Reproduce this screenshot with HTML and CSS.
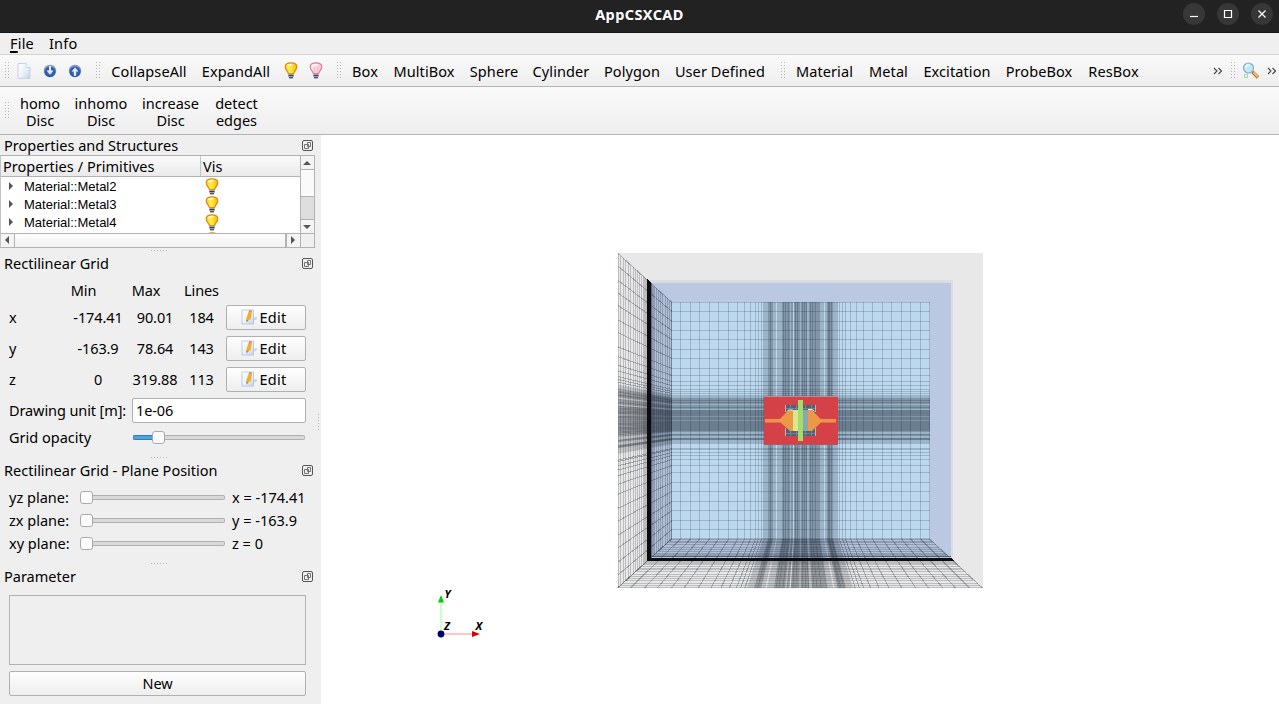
FILE: index.html
```
<!DOCTYPE html>
<html lang="en">
<head>
<meta charset="utf-8">
<title>AppCSXCAD</title>
<link rel="stylesheet" href="styles.css">
</head>
<body>
<svg class="defs" width="0" height="0">
  <defs>
    <linearGradient id="gold" x1="0" x2="1"><stop offset="0" stop-color="#ffd21e"/><stop offset=".4" stop-color="#fff04a"/><stop offset="1" stop-color="#f9b800"/></linearGradient>
    <linearGradient id="pink" x1="0" x2="1"><stop offset="0" stop-color="#ffe9ee"/><stop offset="1" stop-color="#ffc4d2"/></linearGradient>
    <linearGradient id="paper" x1="0" x2="1" y2="1"><stop offset="0" stop-color="#fff"/><stop offset=".5" stop-color="#eef3fb"/><stop offset="1" stop-color="#c3d1ea"/></linearGradient>
    <radialGradient id="orb" cx=".5" cy=".6"><stop offset="0" stop-color="#5b9be8"/><stop offset=".7" stop-color="#2450a6"/><stop offset="1" stop-color="#7d94c4"/></radialGradient>
    <symbol id="bulb" viewBox="0 0 14 17">
      <path d="M4.300 11.500C4 9.300 1.200 8 1.200 4.700 1.200 2.200 3.500.8 7 .8s5.800 1.400 5.800 3.900C12.800 8 10 9.300 9.700 11.500z" fill="url(#gold)" stroke="#e08412" stroke-width="1.200"/>
      <path d="M3.500 4Q5 2.200 8.500 2.600" stroke="#fffbe0" stroke-width="1.500" fill="none"/>
      <path d="M4.300 11.800h5.400v3L8.500 16.500h-3L4.300 14.800z" fill="#a4a4ac"/><path d="M4.500 13.500h5M5 15.700h4" stroke="#3c3c44"/>
    </symbol>
    <symbol id="bulb-off" viewBox="0 0 14 17">
      <path d="M4.300 11.500C4 9.300 1.200 8 1.200 4.700 1.200 2.200 3.500.8 7 .8s5.800 1.400 5.800 3.900C12.800 8 10 9.300 9.700 11.500z" fill="url(#pink)" stroke="#d58296" stroke-width="1.200"/>
      <path d="M5 5l1 6M9 5l-1 6" stroke="#f3a9ba" stroke-width=".7"/>
      <path d="M3.500 4Q5 2.200 8.500 2.600" stroke="#fff" stroke-width="1.300" fill="none"/>
      <path d="M4.300 11.800h5.400v3L8.500 16.500h-3L4.300 14.800z" fill="#a79dbb"/><path d="M4.500 13.500h5M5 15.700h4" stroke="#4c3c64"/>
    </symbol>
    <symbol id="float" viewBox="0 0 12 12">
      <rect x=".5" y=".5" width="10" height="10" rx="1.500" fill="none" stroke="#555"/>
      <path d="M5.500 2.500h3v4h-3zM2.500 4.500h4v4h-4z" fill="none" stroke="#666" stroke-width=".9"/>
    </symbol>
    <symbol id="edit" viewBox="0 0 17 16">
      <path d="M10 9l6-1v2l-6 3z" fill="#cfd2d8"/>
      <rect x="1" y="1" width="11.500" height="14" fill="url(#paper)" stroke="#b0c0e0" stroke-width=".8"/>
      <path d="M5.800 12.500l-.3-2.500L8 2.500l2.600 0L9.500 9.700z" fill="#f6b21c" stroke="#d98e10" stroke-width=".4"/>
      <path d="M7.900 2.600l2.700.1V1.500L8.300 1.200z" fill="#d8705a"/>
      <path d="M5.800 12.700l-.2-1.500 1.200.5z" fill="#333"/>
    </symbol>
  </defs>
</svg>
<header class="titlebar">
  <span class="caption">AppCSXCAD</span>
  <div class="winbtns">
    <svg width="22" height="22"><circle cx="11" cy="11" r="11"/><path d="M7 13.500h8"/></svg>
    <svg width="22" height="22"><circle cx="11" cy="11" r="11"/><path d="M7.500 7.500h7v7h-7z"/></svg>
    <svg width="22" height="22"><circle cx="11" cy="11" r="11"/><path d="M7.500 7.500l7 7M14.500 7.500l-7 7" stroke-width="1.600"/></svg>
  </div>
</header>
<nav class="menubar"><span><u>F</u>ile</span><span>Info</span></nav>
<div class="toolbar main">
  <i class="handle"></i>
  <svg class="new" width="14" height="16"><path d="M1 .5h8l4 4v11H1z" fill="url(#paper)" stroke="#bccbe6" stroke-width=".8"/><path d="M9 .5v4h4" fill="#fff" stroke="#bccbe6" stroke-width=".8"/></svg>
  <svg class="open" width="14" height="14"><circle cx="7" cy="7" r="6.200" fill="url(#orb)"/><path d="M6 2h2v4.500h2.500L7 10.500 3.500 6.500H6z" fill="#e6f0ff"/></svg>
  <svg class="save" width="14" height="14"><circle cx="7" cy="7" r="6.200" fill="url(#orb)"/><path d="M6 12h2V7.500h2.500L7 3.500 3.500 7.500H6z" fill="#e6f0ff"/></svg>
  <i class="handle h2"></i>
  <span class="w91">CollapseAll</span><span class="w91">ExpandAll</span>
  <svg class="b1" width="14" height="17"><use href="#bulb"/></svg>
  <svg class="b2" width="14" height="17"><use href="#bulb-off"/></svg>
  <i class="handle h3"></i>
  <span class="w41">Box</span><span class="w77">MultiBox</span><span class="w63">Sphere</span><span class="w71">Cylinder</span><span class="w71">Polygon</span><span class="w105">User Defined</span>
  <i class="handle h4"></i>
  <span class="w72">Material</span><span class="w55">Metal</span><span class="w83">Excitation</span><span class="w82">ProbeBox</span><span class="w66">ResBox</span>
  <svg class="more m1" width="10" height="8"><path d="M1 1l3 3-3 3M5.500 1l3 3-3 3"/></svg>
  <i class="handle h5"></i>
  <svg class="lens" width="18" height="17"><path d="M10.500 10l5.500 5.500" stroke="#a87832" stroke-width="3.400"/><path d="M11.500 10.500l4.300 4.300" stroke="#f6bf62" stroke-width="1.800"/><circle cx="6.500" cy="6" r="5" fill="#bfe8fa" stroke="#8aa9cc" stroke-width="1.200"/><path d="M3.500 5.500Q4 3 7 3" stroke="#fff" stroke-width="1.500" fill="none"/><rect x="2.500" y="12.500" width="3" height="3" fill="none" stroke="#a9d8a9"/></svg>
  <svg class="more m2" width="10" height="8"><path d="M1 1l3 3-3 3M5.500 1l3 3-3 3"/></svg>
</div>
<div class="toolbar second">
  <i class="handle"></i>
  <span class="d1">homo<br>Disc</span><span class="d2">inhomo<br>Disc</span><span class="d3">increase<br>Disc</span><span class="d4">detect<br>edges</span>
</div>
<main class="work">
  <aside class="docks">
    <div class="stack">
    <h2>Properties and Structures<svg width="12" height="12"><use href="#float"/></svg></h2>
    <div class="tree">
      <div class="pane">
        <div class="thead"><span>Properties / Primitives</span><span>Vis</span></div>
        <div class="rows">
          <div class="row"><i></i><span>Material::Metal2</span><svg width="14" height="17"><use href="#bulb"/></svg></div>
          <div class="row"><i></i><span>Material::Metal3</span><svg width="14" height="17"><use href="#bulb"/></svg></div>
          <div class="row"><i></i><span>Material::Metal4</span><svg width="14" height="17"><use href="#bulb"/></svg></div>
          <div class="row"><i class="blank"></i><span></span><svg width="14" height="17"><use href="#bulb"/></svg></div>
        </div>
      </div>
      <div class="vbar"><b class="up"></b><div class="thumb"></div><div class="track"></div><b class="down"></b></div>
      <div class="hbar"><b class="left"></b><div class="thumb"></div><b class="right"></b></div>
      <div class="corner"></div>
    </div>
    <div class="split"><i></i></div>
    <h2>Rectilinear Grid<svg width="12" height="12"><use href="#float"/></svg></h2>
    <div class="gridinfo">
      <span></span><span class="min">Min</span><span class="max">Max</span><span class="ln">Lines</span><span></span>
      <span class="ax up1">x</span><span class="val up1">-174.41</span><span class="up1">90.01</span><span class="ln up1">184</span><button><svg width="17" height="16"><use href="#edit"/></svg>Edit</button>
      <span class="ax up1">y</span><span class="val up1">-163.9</span><span class="up1">78.64</span><span class="ln up1">143</span><button><svg width="17" height="16"><use href="#edit"/></svg>Edit</button>
      <span class="ax up1">z</span><span class="val up1">0</span><span class="up1">319.88</span><span class="ln up1">113</span><button><svg width="17" height="16"><use href="#edit"/></svg>Edit</button>
    </div>
    <div class="field"><label>Drawing unit [m]:</label><div class="input">1e-06</div></div>
    <div class="field opacity"><label>Grid opacity</label><div class="slider"><b class="fill"></b><b class="knob"></b><b class="rest"></b></div></div>
    <div class="split s2"><i></i></div>
    <h2>Rectilinear Grid - Plane Position<svg width="12" height="12"><use href="#float"/></svg></h2>
    <div class="planes">
      <div class="plane"><label>yz plane:</label><div class="slider"><b class="knob"></b><b class="rest"></b></div><span>x = -174.41</span></div>
      <div class="plane"><label>zx plane:</label><div class="slider"><b class="knob"></b><b class="rest"></b></div><span>y = -163.9</span></div>
      <div class="plane"><label>xy plane:</label><div class="slider"><b class="knob"></b><b class="rest"></b></div><span>z = 0</span></div>
    </div>
    <div class="split s3"><i></i></div>
    <h2>Parameter<svg width="12" height="12"><use href="#float"/></svg></h2>
    <div class="params"></div>
    <button class="newparam">New</button>
    </div>
    <div class="vsplit"><i></i></div>
  </aside>
  <svg class="view" viewBox="321 135 958 569" width="958" height="569">
    <g shape-rendering="crispEdges">
      <rect x="617.500" y="253" width="365.500" height="335" fill="#e8e8e8"/>
      <rect x="647" y="280" width="306" height="281" fill="#dbdce2"/>
      <rect x="650" y="283" width="301" height="276" fill="#bac9e1"/>
      <rect x="672" y="302" width="258" height="237" fill="#bcd8ee"/>
      <g id="mesh" stroke="#08121c" fill="none"></g>
      <path d="M647 279l4 4v274.500h300l3 3.500H647z" fill="#0c0c0e"/>
      <path d="M651.500 283v273.500H951" fill="none" stroke="#26344a" opacity=".6"/>
    </g>
    <g shape-rendering="crispEdges">
      <rect x="764" y="396" width="73.500" height="48.500" fill="#d44247"/>
      <path d="M764 396.500h74" stroke="#c98b98"/><path d="M764 444.500h74" stroke="#a45a6c"/>
      <rect x="786" y="405" width="30" height="31" fill="#4d6275"/>
      <path d="M790.500 405v31M796.500 405v31M805.500 405v31M811.500 405v31M786 408.500h30M786 433.500h30" stroke="#6f8798"/>
      <path d="M785.500 405v7M785.500 428v8M815.500 405v7M815.500 428v8" stroke="#e3a5a8"/>
    </g>
    <path d="M765 419h15l8-8.500 3-.5h3v21h-4l-9.500-8.500H765z" fill="#ec9847"/>
    <path d="M836 419h-15.500l-8-8.500-2-.5h-2.500v21h4l9-8.500h15z" fill="#ec9847"/>
    <path d="M787 411.500l1.500-1.500H793M808 409.500h4l2.500 2" stroke="#f2eee8" fill="none"/>
    <path d="M766 420.500h13M822 420.500h13" stroke="#e08f50"/>
    <rect x="793" y="410" width="5" height="21" fill="#dce68f"/>
    <rect x="803" y="410" width="5" height="21" fill="#8ba7a9"/>
    <rect x="798" y="400" width="5" height="41" fill="#a3dc6c"/>
    <path d="M441 602v29" stroke="#b0ffb0" stroke-width="1.300"/><path d="M444 634h29" stroke="#ffabab" stroke-width="1.300"/>
    <path d="M441 595l3 7.500h-6z" fill="#00d000"/><path d="M480 634l-8 3v-6z" fill="#dc0000"/>
    <circle cx="441" cy="634" r="3.400" fill="#000066"/>
    <g class="axis"><text x="444.500" y="598">Y</text><text x="444" y="630">Z</text><text x="475.500" y="630">X</text></g>
  </svg>
</main>
<script src="mesh.js"></script>
</body>
</html>
```
FILE: styles.css
```
* { box-sizing: border-box; }
body { margin: 0; width: 1279px; height: 704px; overflow: hidden; background: #fff; color: #000; font: 14.5px/18px "Noto Sans", sans-serif; letter-spacing: -0.1px; white-space: nowrap; }
svg { display: block; flex: none; }
.defs { position: absolute; }
.titlebar { height: 33px; background: #222; border-bottom: 1px solid #161616; display: grid; grid-template-columns: 1fr auto 1fr; color: #fff; }
.caption { grid-column: 2; font-weight: 700; font-size: 14.5px; line-height: 28px; letter-spacing: 0.4px; }
.winbtns { grid-column: 3; display: flex; justify-content: flex-end; gap: 12px; padding: 3px 6px 0 0; }
.winbtns circle { fill: #373737; }
.winbtns path { fill: none; stroke: #fff; stroke-width: 1.2; }
.menubar { height: 22px; display: flex; gap: 15px; padding: 1px 0 0 10px; background: #efefef; border-bottom: 1px solid #d2d2d2; letter-spacing: 0.2px; }
.menubar u { text-underline-offset: 2px; text-decoration-thickness: 1.5px; }
.toolbar { display: flex; background: linear-gradient(#fafafa, #eee); border-bottom: 1px solid #b4b4b4; letter-spacing: 0.1px; }
.toolbar.main { height: 32px; align-items: center; }
.toolbar.main span { text-align: center; flex: none; padding-left: 1px; }
.handle { flex: none; width: 5px; height: 17px; margin-left: 5px; background: radial-gradient(circle at .5px .5px, #b5b5b5 .7px, transparent .8px) 0 0 / 3px 3px; }
.new { margin-left: 7px; margin-right: 12px; }
.open { margin-right: 11px; }
.h2 { margin-left: 14px; margin-right: 2px; }
.w91 { width: 91px; } .w91 + .w91 { width: 83px; }
.b1 { margin-left: 7px; margin-right: 11px; }
.h3 { margin-left: 14px; margin-right: 2px; }
.w41 { width: 41px; } .w77 { width: 77px; } .w63 { width: 63px; } .w71 { width: 71px; } .w105 { width: 105px; }
.h4 { margin-left: 9px; margin-right: 2px; }
.w72 { width: 72px; } .w55 { width: 56px; } .w83 { width: 81px; } .w82 { width: 83px; } .w66 { width: 66px; }
.more path { fill: none; stroke: #444; stroke-width: 1.1; }
.m1 { margin-left: auto; margin-right: 8px; }
.h5 { margin-left: 0; margin-right: 6px; }
.lens { margin-right: 7px; }
.m2 { margin-right: 2px; }
.toolbar.second { height: 48px; align-items: center; line-height: 17px; text-align: center; letter-spacing: 0; }
.toolbar.second span { padding-top: 2px; }
.d1 { width: 60px; } .d2 { width: 62px; } .d3 { width: 77px; } .d4 { width: 55px; }
.work { display: flex; height: 569px; }
.docks { width: 321px; background: #efefef; display: flex; flex: none; }
.stack { width: 315px; display: flex; flex-direction: column; flex: none; }
h2 { margin: 0; flex: none; height: 20px; padding: 0 1px 1px 4px; font-size: 14.5px; font-weight: 400; letter-spacing: 0; line-height: 18px; display: flex; justify-content: space-between; align-items: center; }
h2 svg { margin-top: 2px; }
.tree { height: 93px; flex: none; display: grid; grid-template: 77px 14px / 1fr 14px; border: 1px solid #b2b2b2; border-left-color: #c4c4c4; background: #fff; }
.pane { overflow: hidden; }
.thead { display: flex; height: 21px; line-height: 20px; letter-spacing: 0.04px; background: linear-gradient(#fafafa, #eaeaea); border-bottom: 1px solid #b2b2b2; }
.thead span { padding-left: 2px; }
.thead span:first-child { width: 200px; border-right: 1px solid #c6c6c6; }
.row { height: 18px; display: flex; align-items: center; font: 13px "Liberation Sans", sans-serif; letter-spacing: 0; }
.row i { border: 4px solid transparent; border-left: 4px solid #555; border-right: 0; margin-left: 8px; }
.row .blank { border-left-color: transparent; }
.row span { margin-left: 11px; width: 181px; }
.vbar { display: flex; flex-direction: column; border-left: 1px solid #b2b2b2; background: #f4f4f4; }
.vbar b, .hbar b { display: grid; place-items: center; flex: none; }
.vbar b { height: 13px; padding-right: 1px; } .hbar b { width: 13px; padding: 0 1px 1px 0; }
.vbar b::before, .hbar b::before { content: ""; border: 4px solid transparent; }
.up::before { border-top: 0 !important; border-bottom-color: #555 !important; }
.down::before { border-bottom: 0 !important; border-top-color: #555 !important; }
.left::before { border-left: 0 !important; border-right-color: #555 !important; }
.right::before { border-right: 0 !important; border-left-color: #555 !important; }
.vbar .thumb { height: 28px; border: solid #b2b2b2; border-width: 1px 0; background: #fafafa; }
.vbar .track { flex: 1; background: #dedede; border-bottom: 1px solid #b2b2b2; }
.hbar { display: flex; border-top: 1px solid #b2b2b2; background: #f4f4f4; }
.hbar .thumb { flex: 1; border: solid #b2b2b2; border-width: 0 2px 0 1px; background: linear-gradient(#fcfcfc, #f2f2f2); }
.corner { border: solid #b2b2b2; border-width: 1px 0 0 1px; background: #efefef; }
.split { height: 5px; flex: none; padding: 2px 0 0 151px; }
.split i { display: block; width: 17px; height: 1px; background: repeating-linear-gradient(90deg, #b5b5b5 0 1px, transparent 1px 3px); }
.gridinfo { flex: none; display: grid; grid-template-columns: 45px 70px 62px 40px 80px; grid-template-rows: 25px repeat(3, 31px); align-items: center; justify-items: center; padding: 4px 0 0 9px; }
.gridinfo .ax { justify-self: start; }
.gridinfo .up1 { padding-bottom: 2px; }
.gridinfo .min { margin-right: 11px; }
.gridinfo .val { padding-left: 18px; }
.gridinfo .max { margin-right: 18px; }
.gridinfo .ln { margin-right: 9px; }
button { font: inherit; letter-spacing: inherit; color: #000; padding: 0 0 2px; height: 25px; border: 1px solid #b0b0b0; border-radius: 2px; background: linear-gradient(#fefefe, #eee); }
.gridinfo button { width: 80px; display: flex; align-items: center; justify-content: center; gap: 1px; padding-right: 3px; letter-spacing: .3px; }
.gridinfo button svg { margin-left: -1px; }
.field { height: 25px; flex: none; display: flex; align-items: center; padding: 0 9px; margin-top: 3px; }
.field label { width: 123px; padding-bottom: 1px; }
.input { width: 174px; height: 25px; line-height: 23px; padding-left: 3px; border: 1px solid #b0b0b0; border-radius: 2px; background: #fff; }
.opacity { margin-top: 2px; }
.opacity label { padding-bottom: 2px; letter-spacing: 0; }
.slider { display: flex; align-items: center; }
.knob { width: 13px; height: 13px; border: 1px solid #aaa; border-radius: 3px; background: #fcfcfc; flex: none; }
.rest { flex: 1; height: 5px; border: 1px solid #b0b0b0; border-left: 0; border-radius: 0 2px 2px 0; background: #d9d9d9; }
.fill { width: 19px; height: 5px; border: 1px solid #2f7fb5; border-right: 0; border-radius: 2px 0 0 2px; background: #48a6e3; }
.opacity .slider { width: 172px; margin-left: 1px; }
.s2 { margin-top: 5px; }
.planes { flex: none; padding: 6px 0 0 9px; }
.plane { display: flex; height: 23px; align-items: center; letter-spacing: 0; }
.plane label, .plane span { padding-bottom: 2px; }
.plane label { width: 71px; }
.plane .slider { width: 145px; margin-right: 7px; }
.s3 { margin-top: 6px; }
.params { height: 70px; flex: none; margin: 9px 9px 6px; border: 1px solid #b2b2b2; }
.newparam { margin: 0 9px; flex: none; }
.vsplit { width: 6px; padding: 279px 0 0 3px; }
.vsplit i { display: block; width: 1px; height: 17px; background: repeating-linear-gradient(#b5b5b5 0 1px, transparent 1px 3px); }
.axis text { font: italic bold 11px "Noto Sans", sans-serif; letter-spacing: 0; }
```
FILE: mesh.js
```
// Perspective mesh: back-plane lines are projected onto the left and bottom walls.
const LEFT = 672, RIGHT = 930, TOP = 302, BOTTOM = 539, SCALE = 1.4147;
const CX = 801.7, CY = 420.5;
const px = (x, s) => CX + (x - CX) * s;
const py = (y, s) => CY + (y - CY) * s;

// Each entry is [coordinate, number of coincident lines].
const dense = (start, levels) => [...levels].map((n, i) => [start + i + 0.5, +n]);
const single = list => list.map(v => [v, 1]);
const xs = [
  ...single([671.5, 680.5, 690.5, 699.5, 709.5, 718.5, 728.5, 737.5, 744.5, 750.5, 755.5, 758.5, 761.5]),
  ...dense(763, '1111122322111011111232322321220232322123232311232322322221111011233232' + '11111'),
  ...single([839.5, 842.5, 845.5, 850.5, 856.5, 863.5, 872.5, 882.5, 891.5, 901.5, 910.5, 920.5, 929.5])
];
const ys = [
  ...single([302.5, 311.5, 321.5, 330.5, 339.5, 349.5, 358.5, 368.5, 375.5, 381.5, 385.5, 389.5, 391.5, 393.5]),
  ...dense(395, '11122323212232133333323332333333333321132113311' + '11'),
  ...single([448.5, 449.5, 452.5, 455.5, 459.5, 465.5, 472.5, 482.5, 491.5, 501.5, 510.5, 520.5, 529.5, 538.5])
];
const zs = [618.5, 620.5, 623, 625.5, 628, 630.5, 633, 635.5, 637.5, 639.5, 641.5, 643, 644.5, 645.5, 646.5,
  652.5, 653.5, 654.5, 656, 658.2, 660.5, 662.7, 665, 667.2, 669.3, 671.5];

let out = '';
const line = (x1, y1, x2, y2, a, extra = '') => {
  out += `<path d="M${x1.toFixed(1)} ${y1.toFixed(1)}L${x2.toFixed(1)} ${y2.toFixed(1)}" opacity="${a.toFixed(2)}"${extra}/>`;
};
const alpha = n => 1 - Math.pow(0.82, n);
// Crowded wall lines are smoothed so that they read as continuous bands.
const SMOOTH = ' shape-rendering="geometricPrecision" stroke-width="1.3"';
const wall = (x1, y1, x2, y2, n, crowded) =>
  line(x1, y1, x2, y2, crowded ? [0, 0.16, 0.36, 0.46][n] : 0.27, crowded ? SMOOTH : '');
for (const [x, n] of xs) {
  if (!n) continue;
  line(x, TOP, x, BOTTOM, alpha(n));
  wall(x, BOTTOM, px(x, SCALE), py(BOTTOM, SCALE), n, x > 763 && x < 838);
}
for (const [y, n] of ys) {
  if (!n) continue;
  line(LEFT, y, RIGHT, y, alpha(n));
  wall(LEFT, y, px(LEFT, SCALE), py(y, SCALE), n, y > 395 && y < 445);
}
for (const x of zs) {
  const s = (CX - x) / (CX - 671.5);
  line(x, py(TOP, s), x, py(BOTTOM, s), 0.2);
  line(x, py(BOTTOM, s), px(RIGHT, s), py(BOTTOM, s), 0.2);
}
// Faint shading where the substrate volume meets the two meshed walls.
out += '<path d="M652 284L672 302V539H930L951 557H652Z" fill="#08121c" stroke="none" opacity=".05"/>';
document.getElementById('mesh').innerHTML = out;
```
